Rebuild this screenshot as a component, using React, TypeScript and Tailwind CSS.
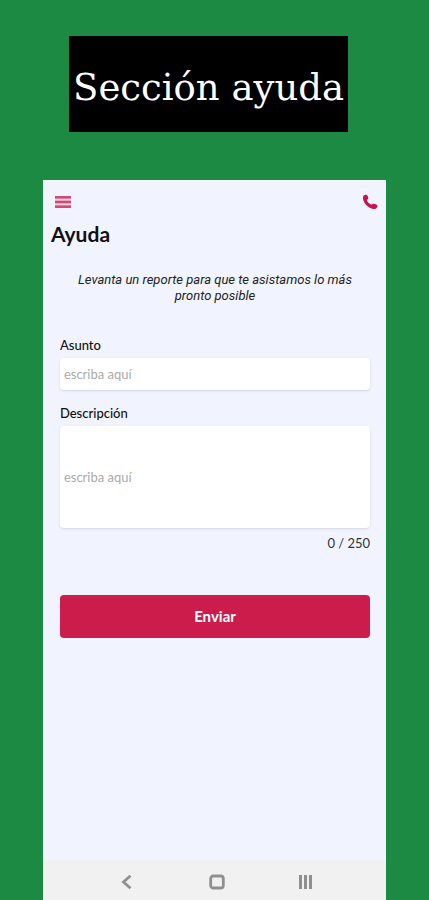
import { useState } from 'react';
import type { FormEvent } from 'react';

const MAX_LENGTH = 250;

function TopBar() {
  return (
    <div className="flex items-center justify-between pl-3 pr-2 pt-3">
      <button type="button" aria-label="Menú" className="text-[#d04a74]">
        <svg width="16" height="20" viewBox="0 0 16 20" fill="currentColor">
          <rect x="0" y="4" width="16" height="12" opacity="0.2" />
          <rect x="0" y="4" width="16" height="2.6" />
          <rect x="0" y="8.7" width="16" height="2.6" />
          <rect x="0" y="13.4" width="16" height="2.6" />
        </svg>
      </button>
      <a href="tel:" aria-label="Llamar" className="text-[#c8144c]">
        <svg width="16" height="20" viewBox="0 0 16 20" fill="currentColor">
          <path d="M1.5 3.8C2.3 2.8 4.2 2.5 5.1 3.2C6.1 4 6.6 5.7 6.1 6.7C5.8 7.4 5 7.7 4.9 8.3C5.2 9.8 7.2 12 9.1 12.6C9.8 12.6 10.3 11.8 11.3 11.7C12.8 11.6 15 12.5 15.5 13.5C16 14.8 14.5 16.6 13 16.9C10.3 17.4 6.3 15.5 3.7 12.5C1.2 9.6 0.3 5.5 1.5 3.8Z" />
        </svg>
      </a>
    </div>
  );
}

function NavigationBar() {
  return (
    <nav className="flex h-10 items-center justify-around bg-[#f1f1f1] pl-10 pr-9 pt-1 text-[#8f8f8f]">
      <button type="button" aria-label="Atrás">
        <svg width="16" height="16" viewBox="0 0 16 16" fill="none" stroke="currentColor" strokeWidth="2.8">
          <path d="M11.5 1.8L4.5 8L11.5 14.2" />
        </svg>
      </button>
      <button type="button" aria-label="Inicio">
        <svg width="16" height="16" viewBox="0 0 16 16" fill="none" stroke="currentColor" strokeWidth="2.8">
          <rect x="1.7" y="2" width="12.6" height="12" rx="2.6" />
        </svg>
      </button>
      <button type="button" aria-label="Recientes">
        <svg width="16" height="16" viewBox="0 0 16 16" fill="currentColor">
          <rect x="1" y="1" width="3" height="14" />
          <rect x="6" y="1" width="3" height="14" />
          <rect x="11" y="1" width="3" height="14" />
        </svg>
      </button>
    </nav>
  );
}

export default function App() {
  const [subject, setSubject] = useState('');
  const [description, setDescription] = useState('');

  function handleSubmit(e: FormEvent) {
    e.preventDefault();
    setSubject('');
    setDescription('');
  }

  return (
    <div className="flex min-h-screen flex-col items-center bg-[#1d8a43] pt-9 font-['Lato',sans-serif]">
      <h1 className="mr-3 bg-black px-1 pb-5 pt-7 text-center font-['DejaVu_Serif',serif] text-[37px] leading-[48px] text-white">
        Sección ayuda
      </h1>

      {/* Phone screen */}
      <main className="mt-12 flex w-4/5 grow flex-col bg-[#f1f4ff]">
        <TopBar />
        <h2 className="px-2 text-[21px] font-bold leading-[44px] text-[#111111]">Ayuda</h2>

        <form onSubmit={handleSubmit} className="flex flex-col pl-[17px] pr-4 pt-4">
          <p className="px-2 text-center font-['Roboto',sans-serif] text-[13px] italic leading-4 text-[#222222]">
            Levanta un reporte para que te asistamos lo más pronto posible
          </p>

          <label htmlFor="subject" className="mt-8 text-[13px] font-medium leading-[18px] text-[#111111]">
            Asunto
          </label>
          <input
            id="subject"
            value={subject}
            onChange={(e) => setSubject(e.target.value)}
            placeholder="escriba aquí"
            className="mt-1 h-8 rounded bg-white px-1 text-[13px] shadow outline-none placeholder:text-[#aaaaaa]"
          />

          <label htmlFor="description" className="mt-3.5 text-[13px] font-medium leading-[18px] text-[#111111]">
            Descripción
          </label>
          <textarea
            id="description"
            rows={1}
            maxLength={MAX_LENGTH}
            value={description}
            onChange={(e) => setDescription(e.target.value)}
            placeholder="escriba aquí"
            className="mt-1 resize-none rounded bg-white px-1 py-[42px] text-[13px] leading-[18px] shadow outline-none placeholder:text-[#aaaaaa]"
          />
          <p className="mt-1.5 text-right text-[13px] leading-[18px] text-[#333333]">
            {description.length} / {MAX_LENGTH}
          </p>

          <button type="submit" className="mt-[43px] h-[43px] rounded bg-[#cb1c4b] text-[15px] font-bold text-white">
            Enviar
          </button>
        </form>

        <div className="mt-auto">
          <NavigationBar />
        </div>
      </main>
    </div>
  );
}
